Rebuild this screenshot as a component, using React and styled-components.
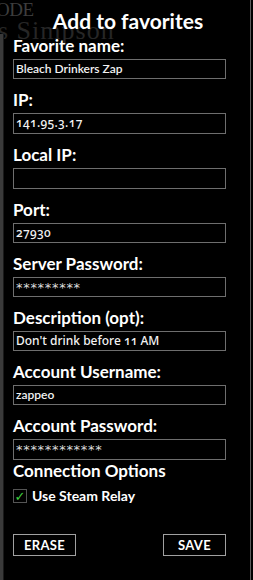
import React from 'react'
import styled, { createGlobalStyle } from 'styled-components'

const GlobalStyle = createGlobalStyle`
  html, body {
    margin: 0;
    padding: 0;
    background: #000;
  }
  body {
    font-family: Lato, "Open Sans", sans-serif;
    color: #fff;
  }
`

export const Screen = styled.div`
  position: relative;
  width: 253px;
  height: 580px;
  overflow: hidden;
  background: #000;
`

// what is left visible of the page behind the dialog
export const Backdrop = styled.div`
  display: flex;
  flex-direction: column;
  height: 100%;
  font-family: "Liberation Serif", serif;
  .mode {
    font-size: 19px;
    line-height: 20px;
    color: #3d3d3d;
    margin-left: -4px;
    letter-spacing: -0.5px;
  }
  .name {
    font-size: 26px;
    line-height: 22px;
    color: #262626;
    margin-left: -2px;
    letter-spacing: 1px;
  }
  .frame {
    flex: 1;
    margin-top: -8px;
    border-left: 3px solid #3a3a3a;
    box-shadow: inset 1px 0 0 #1a1a1a;
  }
`

export const Dialog = styled.div`
  position: absolute;
  inset: 0 2px 0 0;
  border-right: 1px solid #5c5c5c;
  padding: 10px 0 0 13px;
  display: flex;
  flex-direction: column;
`

export const Title = styled.h1`
  margin: 0 0 0 -13px;
  padding-left: 6px;
  font-size: 21px;
  line-height: 22px;
  font-weight: 700;
  text-align: center;
`

export const Field = styled.div`
  display: flex;
  flex-direction: column;
  margin-top: 11px;
  ${Title} + & {
    margin-top: 4px;
  }
`

export const Label = styled.div`
  font-size: 17px;
  line-height: 20px;
  font-weight: 700;
  margin-bottom: 3px;
`

export const Input = styled.div`
  box-sizing: border-box;
  width: 213px;
  height: ${(p) => p.$h || 20}px;
  border: 1px solid #6e6e6e;
  padding: 0 2px;
  font-size: 12px;
  line-height: 18px;
  font-weight: 600;
  color: #f2f2f2;
  white-space: nowrap;
  overflow: hidden;
  &.secret {
    font-family: "DejaVu Sans", sans-serif;
    font-size: 13px;
    font-weight: 400;
    line-height: 20px;
    letter-spacing: 0.7px;
    color: #ddd;
  }
  &.number {
    font-family: "Noto Sans", sans-serif;
    font-variant-numeric: oldstyle-nums;
    font-size: 12px;
    font-weight: 500;
    letter-spacing: 0.3px;
  }
  &.prose {
    font-family: "Noto Sans", sans-serif;
    font-variant-numeric: oldstyle-nums;
    font-size: 12px;
    font-weight: 500;
  }
`

export const Section = styled.div`
  margin-top: 1px;
  font-size: 17px;
  line-height: 20px;
  font-weight: 700;
`

export const CheckRow = styled.label`
  display: flex;
  align-items: center;
  gap: 5px;
  margin-top: 7px;
  font-size: 14px;
  line-height: 16px;
  font-weight: 700;
`

export const Box = styled.span`
  box-sizing: border-box;
  width: 14px;
  height: 14px;
  border: 1px solid #555;
  display: flex;
  align-items: center;
  justify-content: center;
  color: #3fcf3f;
  font-size: 13px;
  line-height: 1;
  font-family: "DejaVu Sans", sans-serif;
`

export const Buttons = styled.div`
  display: flex;
  justify-content: space-between;
  width: 213px;
  margin-top: 30px;
`

export const Button = styled.button`
  box-sizing: border-box;
  width: 63px;
  height: 22px;
  padding: 0;
  background: #000;
  border: 1px solid #a0a0a0;
  color: #fff;
  font-family: Lato, sans-serif;
  font-size: 13px;
  font-weight: 700;
  letter-spacing: 0.3px;
`

const fields = [
  { label: 'Favorite name:', value: 'Bleach Drinkers Zap' },
  { label: 'IP:', value: '141.95.3.17', h: 21, kind: 'number' },
  { label: 'Local IP:', value: '', h: 21 },
  { label: 'Port:', value: '27930', kind: 'number' },
  { label: 'Server Password:', value: '*********', kind: 'secret' },
  { label: 'Description (opt):', value: "Don't drink before 11 AM", kind: 'prose' },
  { label: 'Account Username:', value: 'zappeo' },
  { label: 'Account Password:', value: '************', kind: 'secret', h: 21 },
]

const App = () => {
  return (
    <Screen>
      <GlobalStyle />
      <Backdrop>
        <div className='mode'>ODE</div>
        <div className='name'>s Simpson</div>
        <div className='frame' />
      </Backdrop>
      <Dialog>
        <Title>Add to favorites</Title>
        {fields.map((f) => (
          <Field key={f.label}>
            <Label>{f.label}</Label>
            <Input $h={f.h} className={f.kind || ''}>{f.value}</Input>
          </Field>
        ))}
        <Section>Connection Options</Section>
        <CheckRow>
          <Box>✓</Box>
          Use Steam Relay
        </CheckRow>
        <Buttons>
          <Button>ERASE</Button>
          <Button>SAVE</Button>
        </Buttons>
      </Dialog>
    </Screen>
  )
}

export default App
